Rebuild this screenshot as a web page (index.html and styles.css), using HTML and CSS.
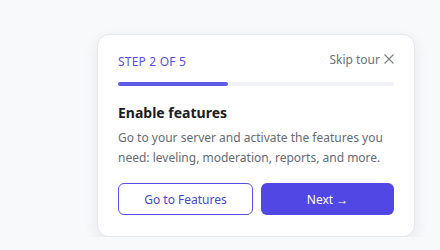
FILE: index.html
```html
<!DOCTYPE html>
<html>
<head>
    <title>Tour step</title>
    <link rel="stylesheet" href="styles.css">
</head>
<body>
    <div class="tour-card">
        <div class="tour-header">
            <span class="step-label">STEP 2 OF 5</span>
            <button class="skip-btn">Skip tour
                <svg width="10" height="10" viewBox="0 0 10 10"><path d="M0.5 0.5 L9.5 9.5 M9.5 0.5 L0.5 9.5" stroke="currentColor" stroke-width="1.1" fill="none"/></svg>
            </button>
        </div>

        <div class="progress-track">
            <div class="progress-fill" style="width: 40%"></div>
        </div>

        <h2 class="tour-title">Enable features</h2>
        <p class="tour-text">Go to your server and activate the features you need: leveling, moderation, reports, and more.</p>

        <div class="tour-actions">
            <button class="outline-btn">Go to Features</button>
            <button class="primary-btn">Next →</button>
        </div>
    </div>
</body>
</html>
```

FILE: styles.css
```css
body {
    font-family: "Noto Sans", sans-serif;
    background-color: #f8f9fb;
    margin: 0;
    padding: 34px 0 0 97px;
}

.tour-card {
    width: 318px;
    box-sizing: border-box;
    background-color: white;
    border: 1px solid #e6e7ec;
    border-radius: 12px;
    padding: 18px 20px 21px 20px;
    box-shadow: 0 6px 16px rgba(20, 24, 40, 0.08);
}

.tour-header {
    display: flex;
    justify-content: space-between;
    align-items: center;
    height: 16px;
}

.step-label {
    font-size: 12px;
    color: #5552e0;
    letter-spacing: 0.2px;
}

.skip-btn {
    display: flex;
    align-items: center;
    gap: 4px;
    border: none;
    background: none;
    padding: 0;
    font-family: inherit;
    font-size: 12px;
    color: #6b6f7a;
    cursor: pointer;
    margin-top: -4px;
}

.skip-btn svg {
    color: #7a7e88;
}

.progress-track {
    height: 4px;
    background-color: #f0f1f4;
    border-radius: 2px;
    margin-top: 13px;
}

.progress-fill {
    height: 100%;
    background-color: #5c5ce8;
    border-radius: 2px;
}

.tour-title {
    font-size: 14px;
    font-weight: bold;
    color: #1a1c24;
    margin: 17px 0 0 0;
    line-height: 20px;
}

.tour-text {
    font-size: 12px;
    color: #656a75;
    line-height: 20px;
    margin: 5px 0 0 0;
}

.tour-actions {
    display: flex;
    gap: 8px;
    margin-top: 15px;
}

.tour-actions button {
    flex: 1;
    height: 32px;
    border-radius: 6px;
    font-family: inherit;
    font-size: 12px;
    cursor: pointer;
}

.outline-btn {
    background-color: white;
    border: 1px solid #5552e0;
    color: #4a47d4;
}

.primary-btn {
    background-color: #5047e4;
    border: none;
    color: white;
}
```
